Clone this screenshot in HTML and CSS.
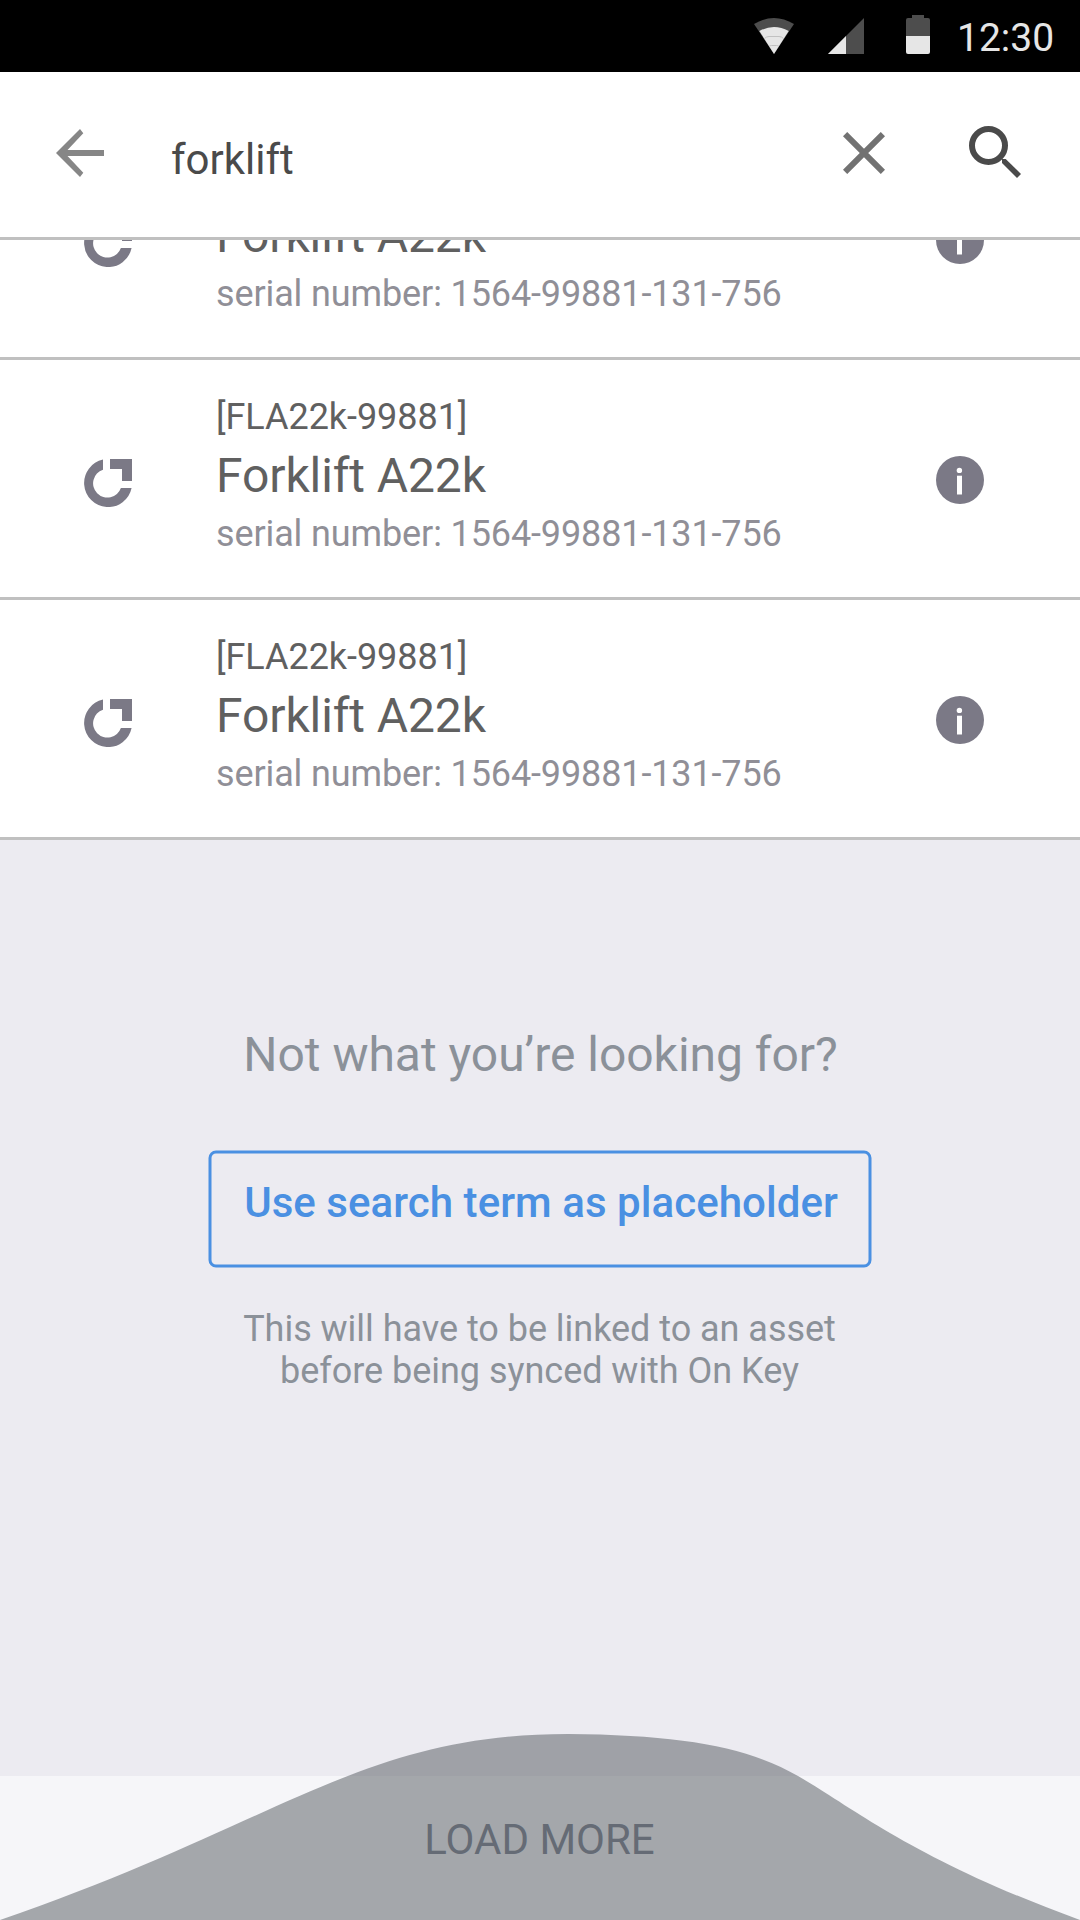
FILE: index.html
```html
<!DOCTYPE html>
<html lang="en">
<head>
<meta charset="utf-8">
<title>Asset search</title>
<link rel="stylesheet" href="styles.css">
</head>
<body>
<svg class="defs" aria-hidden="true">
  <symbol id="asset" viewBox="0 0 48 48">
    <path d="M19 0.6A24 24 0 1 0 47.6 29H36.9A14.3 14.3 0 1 1 19 10.7Z"/>
    <path d="M26 0H48V22H38V10H26Z"/>
  </symbol>
  <symbol id="info" viewBox="0 0 48 48">
    <circle cx="24" cy="24" r="24"/>
    <circle fill="#fff" cx="23.400" cy="14.400" r="2.700"/>
    <path fill="#fff" d="M21 19.700h5v18.800h-5z"/>
  </symbol>
</svg>
<div class="screen">
  <header class="status">
    <svg class="status-wifi" viewBox="0 0 40 36"><path fill="#4d4d4d" d="M0 6Q20-6 40 6L20 36Z"/><path fill="#e6e6e6" d="M5.3 13Q20 5 34.7 13L20 36Z"/><path fill="none" stroke="#b8b8b8" stroke-width=".8" d="M10.5 20.500q2-2 4.500-2h10q2.500 0 4.500 2M15 28.500q1-1 2.500-1h5q1.500 0 2.500 1"/></svg>
    <svg class="status-cell" viewBox="0 0 36 36"><path fill="#4d4d4d" d="M36 0V36H0Z"/><path fill="#e6e6e6" d="M18 18V36H0Z"/></svg>
    <svg class="status-battery" viewBox="0 0 24 39"><path fill="#4d4d4d" d="M6 0H18V3H22Q24 3 24 5V21H0V5Q0 3 2 3H6Z"/><path fill="#e6e6e6" d="M0 21H24V37Q24 39 22 39H2Q0 39 0 37Z"/></svg>
    <time class="clock">12:30</time>
  </header>
  <div class="searchbar">
    <svg class="back" viewBox="0 0 48 48"><path d="M48 21H11.500L27.300 4.200L24 0L0 24L24 48L27.300 43.800L11.500 27H48Z"/></svg>
    <div class="term">forklift</div>
    <svg class="clear" viewBox="0 0 42 42"><path d="M2.100 2.100L39.900 39.900M39.900 2.100L2.100 39.900"/></svg>
    <svg class="search" viewBox="0 0 52 52"><circle cx="19.500" cy="19.500" r="16.500"/><path d="M33 33H36.700L52 48L48 52L33 37Z"/></svg>
  </div>
  <main class="list">
    <article class="row row-scrolled">
      <svg class="row-icon"><use href="#asset"/></svg>
      <div class="row-text"><div class="name">Forklift A22k</div><div class="serial">serial number: 1564-99881-131-756</div></div>
      <svg class="row-info"><use href="#info"/></svg>
    </article>
    <article class="row">
      <svg class="row-icon"><use href="#asset"/></svg>
      <div class="row-text"><div class="code">[FLA22k-99881]</div><div class="name">Forklift A22k</div><div class="serial">serial number: 1564-99881-131-756</div></div>
      <svg class="row-info"><use href="#info"/></svg>
    </article>
    <article class="row">
      <svg class="row-icon"><use href="#asset"/></svg>
      <div class="row-text"><div class="code">[FLA22k-99881]</div><div class="name">Forklift A22k</div><div class="serial">serial number: 1564-99881-131-756</div></div>
      <svg class="row-info"><use href="#info"/></svg>
    </article>
  </main>
  <section class="fallback">
    <h2 class="question">Not what you’re looking for?</h2>
    <button class="placeholder"><svg class="outline" viewBox="0 0 664 118"><rect x="2" y="2" width="660" height="114" rx="6"/></svg>Use search term as placeholder</button>
    <p class="hint">This will have to be linked to an asset<br>before being synced with On Key</p>
  </section>
  <footer class="more">
    <svg class="ripple" viewBox="0 0 1080 186"><path d="M0 186C280 90 360 0 568 0C682 1 748 13 798 42C855 75 915 126 1080 186Z"/></svg>
    <span class="more-label">LOAD MORE</span>
  </footer>
</div>
</body>
</html>
```
FILE: styles.css
```css
* { box-sizing: border-box; margin: 0; }
body { font-family: Roboto, "Liberation Sans", sans-serif; background: #ecebf1; }
svg { display: block; flex: none; }
.defs { width: 0; height: 0; position: absolute; }
.screen { width: 1080px; height: 1920px; overflow: hidden; display: flex; flex-direction: column; background: #ecebf1; }

.status { height: 72px; flex: none; background: #000; display: flex; align-items: flex-start; padding: 15px 0 0 754px; }
.status-wifi { width: 40px; height: 36px; margin-top: 3px; }
.status-cell { width: 36px; height: 36px; margin: 3px 0 0 34px; }
.status-battery { width: 24px; height: 39px; margin-left: 42px; }
.clock { color: #e6e6e6; font-size: 39px; line-height: 48px; margin: -1px 0 0 27px; white-space: nowrap; }

.searchbar { height: 168px; flex: none; background: #fff; border-bottom: 3px solid #c0c0c0; display: flex; align-items: flex-start; padding-left: 56px; }
.back { width: 48px; height: 48px; margin-top: 57px; fill: #868686; }
.term { width: 672px; margin: 64px 0 0 67px; font-size: 42px; line-height: 48px; color: #4a4a4a; }
.clear { width: 42px; height: 42px; margin-top: 60px; stroke: #727272; stroke-width: 6; }
.search { width: 52px; height: 52px; margin: 54px 0 0 84px; fill: #4a4a4a; }
.search circle { fill: none; stroke: #4a4a4a; stroke-width: 6; }

.list { height: 600px; flex: none; overflow: hidden; display: flex; flex-direction: column; justify-content: flex-end; background: #fff; }
.row { height: 240px; flex: none; display: flex; align-items: flex-start; padding-left: 84px; border-bottom: 3px solid #c0c0c0; }
.row-icon { width: 48px; height: 48px; margin-top: 99px; fill: #7b7986; }
.row-text { width: 720px; margin: 36px 0 0 84px; }
.row-scrolled .row-text { margin-top: 78px; }
.code, .serial { font-size: 36px; line-height: 42px; }
.code { color: #606060; letter-spacing: -.05px; }
.name { font-size: 48px; line-height: 56px; padding-top: 10px; color: #606060; letter-spacing: -.1px; }
.serial { margin-top: 9px; color: #908f97; letter-spacing: -.12px; }
.row-info { width: 48px; height: 48px; margin-top: 96px; fill: #7b7986; }

.fallback { height: 936px; flex: none; display: flex; flex-direction: column; align-items: center; padding-top: 187px; text-align: center; }
.question { font-size: 48px; font-weight: 400; line-height: 56px; letter-spacing: -.03px; padding-left: 1px; color: #8b9199; }
.placeholder { position: relative; width: 664px; height: 118px; margin-top: 67px; padding: 0 0 12px 2px; border: 0; background: none; color: #4a90e2; font: 500 42px/48px Roboto, "Liberation Sans", sans-serif; letter-spacing: .05px; }
.outline { position: absolute; left: 0; top: 0; width: 664px; height: 118px; fill: none; stroke: #4a90e2; stroke-width: 3; }
.hint { margin-top: 40px; font-size: 36px; line-height: 42px; letter-spacing: -.03px; padding-right: 1px; color: #8b9199; }

.more { height: 144px; flex: none; position: relative; background: #f6f6f9; display: flex; justify-content: center; padding-top: 40px; }
.ripple { position: absolute; left: 0; bottom: 0; width: 1080px; height: 186px; fill: rgba(81, 87, 94, .5); }
.more-label { position: relative; font-size: 42px; line-height: 48px; padding-right: 1px; color: #656b75; }
```
